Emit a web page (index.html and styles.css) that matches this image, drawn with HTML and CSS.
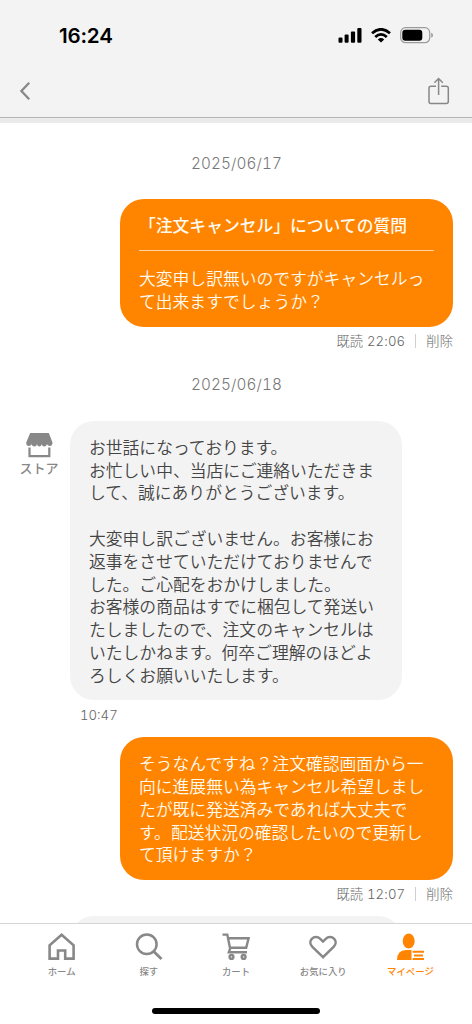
FILE: index.html
```html
<!DOCTYPE html>
<html lang="ja">
<head>
<meta charset="utf-8">
<title>お問い合わせ</title>
<link rel="stylesheet" href="styles.css">
</head>
<body>
<div class="app">
  <header class="header">
    <div class="status">
      <span class="clock">16:24</span>
      <div class="indicators">
        <svg class="signal" width="24" height="16" viewBox="0 0 24 16"><rect x="0.5" y="9.5" width="4" height="5.3" rx="1"/><rect x="6.6" y="6.5" width="4" height="8.3" rx="1"/><rect x="12.9" y="3.5" width="4.2" height="11.3" rx="1"/><rect x="19.3" y="0.1" width="4.2" height="14.7" rx="1"/></svg>
        <svg class="wifi" width="20" height="15" viewBox="0 0 20 15"><path d="M1 5.3Q10-2.7 19 5.3M4.2 9Q10 3.7 15.8 9" fill="none" stroke="#000" stroke-width="2.7"/><path d="M6.8 11.4Q10 8.8 13.2 11.4L10 14.5Z"/></svg>
        <svg class="battery" width="34" height="17" viewBox="0 0 34 17"><rect x=".7" y=".7" width="29" height="15" rx="4.8" fill="none" stroke="#9b9b9b" stroke-width="1.2"/><rect x="2.3" y="2.7" width="20" height="11" rx="3"/><path d="M31.2 5.7Q33 6.5 33 8.2T31.2 10.7Z" fill="#9b9b9b"/></svg>
      </div>
    </div>
    <nav class="toolbar">
      <svg width="12" height="20" viewBox="0 0 12 20"><path d="M10.2 1.7 2.4 10l7.8 8.3" fill="none" stroke="#888" stroke-width="2.3"/></svg>
      <svg width="22" height="28" viewBox="0 0 22 28"><path d="M8 9.2H3Q1 9.2 1 11.2V24.6Q1 26.6 3 26.6H18.3Q20.3 26.6 20.3 24.6V11.2Q20.3 9.2 18.3 9.2H13.2M10.6 18V1.6M6.4 5.8 10.6 1.5 14.8 5.8" fill="none" stroke="#888" stroke-width="1.5"/></svg>
    </nav>
  </header>

  <main class="chat">
    <div class="date">2025/06/17</div>
    <section class="bubble sent question">
      <h2 class="title">「注文キャンセル」についての質問</h2>
      <p class="text">大変申し訳無いのですがキャンセルっ<br>て出来ますでしょうか？</p>
    </section>
    <div class="meta"><span>既読 22:06</span><i class="bar"></i><span>削除</span></div>
    <div class="date second">2025/06/18</div>
    <div class="received-row">
      <div class="store">
        <svg width="27" height="25" viewBox="0 0 27 25"><path d="M4.2 0H22.8L26.5 9.5Q26.5 13 23.8 13Q21.8 13 21 11.3Q20.3 13.6 18.2 13.6Q16.3 13.6 15.7 11.3Q15.2 13.6 13.3 13.6Q11.5 13.6 11 11.3Q10.4 13.6 8.4 13.6Q6.3 13.6 5.6 11.3Q5 13 2.8 13Q.2 13 .2 9.5Z" fill="#888"/><path d="M3.5 14.5V23.2H23.3V14.5" fill="none" stroke="#888" stroke-width="2.2"/></svg>
        <span>ストア</span>
      </div>
      <section class="bubble received">
        <p class="text">お世話になっております。<br>お忙しい中、当店にご連絡いただきま<br>して、誠にありがとうございます。<br><br>大変申し訳ございません。お客様にお<br>返事をさせていただけておりませんで<br>した。ご心配をおかけしました。<br>お客様の商品はすでに梱包して発送い<br>たしましたので、注文のキャンセルは<br>いたしかねます。何卒ご理解のほどよ<br>ろしくお願いいたします。</p>
      </section>
    </div>
    <div class="time">10:47</div>
    <section class="bubble sent">
      <p class="text">そうなんですね？注文確認画面から一<br>向に進展無い為キャンセル希望しまし<br>たが既に発送済みであれば大丈夫で<br>す。配送状況の確認したいので更新し<br>て頂けますか？</p>
    </section>
    <div class="meta"><span>既読 12:07</span><i class="bar"></i><span>削除</span></div>
    <section class="bubble received next"></section>
  </main>

  <footer class="footer">
    <nav class="tabs">
      <a class="tab"><svg width="28" height="28" viewBox="0 0 28 28"><path d="M1.6 25.6V12.4L13.6 1.8 25.6 12.4V25.6H17.2V17.5H10V25.6Z" fill="none" stroke="#888" stroke-width="2.6"/></svg><span>ホーム</span></a>
      <a class="tab"><svg width="28" height="28" viewBox="0 0 28 28"><circle cx="11.8" cy="11.3" r="9.8" fill="none" stroke="#888" stroke-width="2.5"/><path d="M18.5 18.3 26.5 26" stroke="#888" stroke-width="2.8"/></svg><span>探す</span></a>
      <a class="tab"><svg width="28" height="28" viewBox="0 0 28 28"><g fill="none" stroke="#888" stroke-width="2.4"><path d="M.5 1.6H5.3L8.2 16M6 5.2H26.6L24.2 14.8H8M8.3 15.1 6.8 19.2H25"/><circle cx="9.5" cy="23.9" r="1.9"/><circle cx="21.6" cy="23.9" r="1.9"/></g></svg><span>カート</span></a>
      <a class="tab"><svg width="28" height="28" viewBox="0 0 28 28"><path d="M14 24.2 3.4 13.8C.6 11 .9 7.8 2.8 5.8C5.2 3.3 8.8 3.4 11 5.7L14 8.6 17 5.7C19.2 3.4 22.8 3.3 25.2 5.8C27.1 7.8 27.4 11 24.6 13.8Z" fill="none" stroke="#888" stroke-width="2.5"/></svg><span>お気に入り</span></a>
      <a class="tab active"><svg width="28" height="28" viewBox="0 0 28 28"><g fill="#ff8500"><ellipse cx="12.7" cy="8" rx="6" ry="7.6"/><path d="M1 27Q1.3 17 10 17H15.5V27ZM16.6 17.8H28V19.8H16.6ZM18 21.5H27V23.5H18ZM16.6 25H28V27H16.6Z"/></g></svg><span>マイページ</span></a>
    </nav>
    <div class="home-indicator"></div>
  </footer>
</div>
</body>
</html>
```

FILE: styles.css
```css
* { box-sizing: border-box; }
body {
  margin: 0;
  font-family: "Noto Sans CJK JP", sans-serif;
  color: #444;
  background: #fff;
}
.app { display: flex; flex-direction: column; height: 1024px; overflow: hidden; }
.header {
  flex: none;
  height: 123px;
  background: #f3f3f3;
  border-bottom: 5px solid #ebebeb;
  box-shadow: inset 0 -1px #b5b5b5;
}
.status { display: flex; justify-content: space-between; height: 70px; padding: 1px 38px 0 59px; align-items: center; }
.clock { font: 600 20.6px/24px Inter, sans-serif; letter-spacing: -.2px; color: #000; }
.indicators { display: flex; align-items: center; gap: 9px; }
.toolbar { display: flex; justify-content: space-between; align-items: center; height: 42px; padding: 0 22px 0 19px; }
.chat { flex: 1; min-height: 0; overflow: hidden; padding: 28.8px 19px 0 20px; }
.date {
  margin-bottom: 24.7px;
  text-align: center;
  font: 300 15.3px/23px Inter, "Liberation Sans", sans-serif;
  font-variant-numeric: tabular-nums;
  letter-spacing: .12px;
  color: #777;
}
.date.second { margin: 21px 0 25px; }
.bubble { width: 333px; padding: 15px 19px 13.5px; border-radius: 24px; }
.sent { margin-left: auto; background: #ff8500; color: #fffaf0; }
.received { width: 332px; background: #f3f3f3; }
.title {
  margin: 0 0 16px;
  padding-bottom: 13px;
  border-bottom: 1px solid #ffd5a0;
  font-size: 16.8px;
  line-height: 23px;
  font-weight: 500;
}
.question { padding-bottom: 13.8px; }
.text { margin: 0; font-size: 16.8px; line-height: 22.8px; font-weight: 350; white-space: nowrap; }
.meta {
  display: flex;
  justify-content: flex-end;
  align-items: center;
  height: 22px;
  margin-top: 3px;
  font-family: Inter, "Noto Sans CJK JP", sans-serif;
  font-size: 13.2px;
  line-height: 22px;
  font-weight: 300;
  font-variant-numeric: tabular-nums;
  letter-spacing: .15px;
  color: #666;
}
.bar { width: 1px; height: 14px; margin: 0 10px; background: #d0d0d0; }
.received-row { display: flex; }
.store { display: flex; flex-direction: column; align-items: center; width: 38px; margin-right: 12px; padding-top: 12.5px; font-size: 13px; line-height: 19px; color: #888; font-weight: 500; white-space: nowrap; }
.store svg { flex: none; }
.time { margin: 4.5px 0 11.5px 60px; font: 300 13.2px/21px Inter, sans-serif; font-variant-numeric: tabular-nums; color: #666; }
.next { height: 80px; margin: 11px 0 0 50px; }
.footer { flex: none; height: 101px; border-top: 1px solid #d5d5d5; background: #fff; }
.tabs { display: flex; height: 84px; padding: 9px 18px 0; }
.tab { display: flex; flex: 1; flex-direction: column; align-items: center; font-size: 9.4px; line-height: 14px; font-weight: 500; color: #888; }
.tab span { margin-top: 3px; }
.active { color: #ff8500; }
.home-indicator { width: 168px; height: 6px; margin: 0 auto; border-radius: 3px; background: #000; }
```
